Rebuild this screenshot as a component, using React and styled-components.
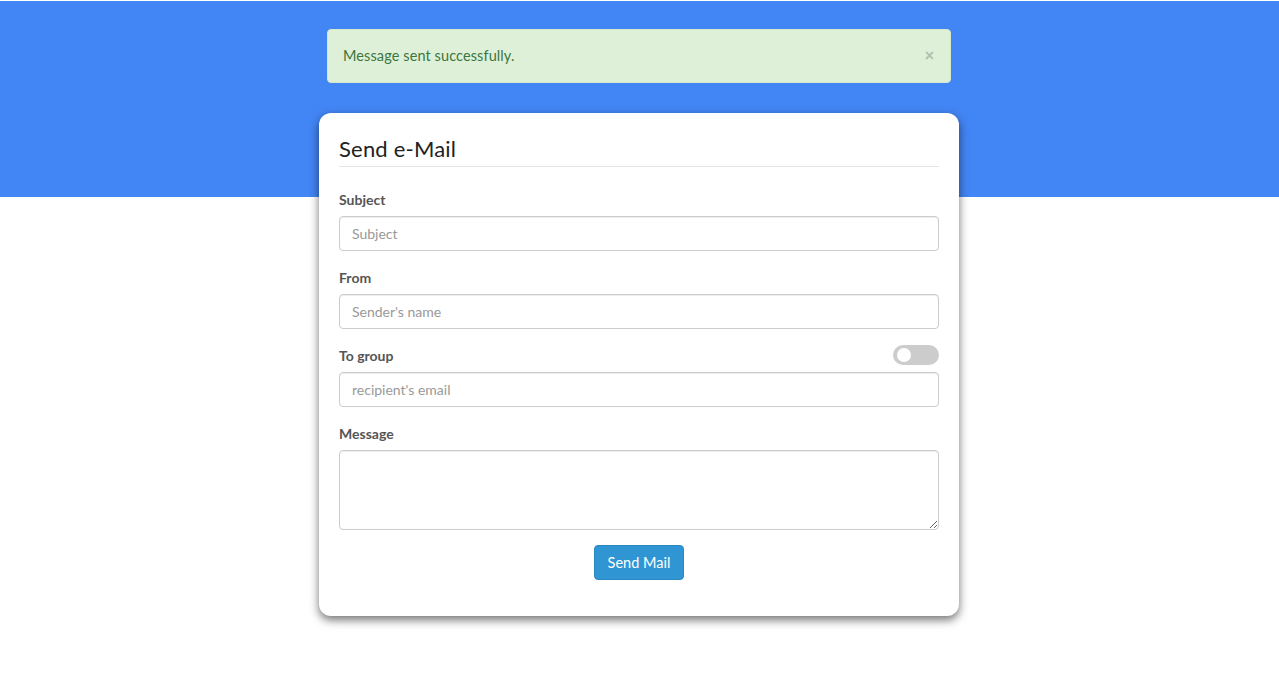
import React, { useState } from 'react';
import styled, { createGlobalStyle } from 'styled-components';

const GlobalStyle = createGlobalStyle`
    html, body {
        margin: 0;
        padding: 0;
        background: #fff;
    }

    body {
        font-family: 'Lato', 'Open Sans', sans-serif;
        font-size: 14px;
        line-height: 1.42857;
        color: #333;
    }

    * {
        box-sizing: border-box;
    }
`;

const Page = styled.div`
    position: relative;
    min-height: 681px;
    padding-top: 1px;
`;

const Banner = styled.div`
    height: 196px;
    background: #4285f4;
`;

const Content = styled.div`
    position: absolute;
    top: 29px;
    left: 0;
    right: 1px;
    display: flex;
    flex-direction: column;
    align-items: center;
`;

const Alert = styled.div`
    width: 624px;
    height: 54px;
    display: flex;
    align-items: center;
    justify-content: space-between;
    padding: 0 16px 0 15px;
    background: #dff0d8;
    border: 1px solid #d6e9c6;
    border-radius: 4px;
    color: #3c763d;
    font-size: 14.5px;
    letter-spacing: 0.1px;
`;

const Close = styled.button`
    border: 0;
    background: transparent;
    padding: 0;
    color: #000;
    opacity: 0.2;
    font-size: 16px;
    font-weight: 700;
    line-height: 1;
    cursor: pointer;
    font-family: 'Liberation Sans', sans-serif;
`;

const Card = styled.form`
    width: 640px;
    margin-top: 30px;
    padding: 20px 20px 36px;
    background: #fff;
    border-radius: 12px;
    box-shadow: 0 4px 10px rgba(0, 0, 0, 0.55);
`;

const Title = styled.h3`
    margin: 3px 0 0;
    padding-bottom: 4px;
    font-size: 22px;
    font-weight: 400;
    line-height: 26px;
    color: #222;
    border-bottom: 1px solid #e5e5e5;
    letter-spacing: 0.2px;
`;

const Fields = styled.div`
    margin-top: 23px;
`;

const Group = styled.div`
    margin-bottom: 17px;
`;

const LabelRow = styled.div`
    display: flex;
    align-items: flex-start;
    justify-content: space-between;
    height: 20px;
    margin-bottom: 6px;
`;

const Label = styled.label`
    font-weight: 700;
    color: #555;
    font-size: 14px;
    line-height: 20px;
`;

const Input = styled.input`
    display: block;
    width: 100%;
    height: 35px;
    padding: 6px 12px;
    font-family: inherit;
    font-size: 14px;
    color: #555;
    border: 1px solid #ccc;
    border-radius: 4px;
    box-shadow: inset 0 1px 1px rgba(0, 0, 0, 0.075);
    outline: none;

    &::placeholder {
        color: #999;
    }
`;

const TextArea = styled.textarea`
    display: block;
    width: 100%;
    height: 80px;
    padding: 6px 12px;
    font-family: inherit;
    font-size: 14px;
    border: 1px solid #ccc;
    border-radius: 4px;
    box-shadow: inset 0 1px 1px rgba(0, 0, 0, 0.075);
    outline: none;
    resize: vertical;
`;

const Toggle = styled.button`
    position: relative;
    width: 46px;
    height: 20px;
    margin-top: -1px;
    padding: 0;
    border: 0;
    border-radius: 10px;
    background: ${props => (props.on ? '#4285f4' : '#ccc')};
    cursor: pointer;

    &:after {
        content: '';
        position: absolute;
        top: 3px;
        left: ${props => (props.on ? '29px' : '4px')};
        width: 14px;
        height: 14px;
        border-radius: 50%;
        background: #fff;
        transition: left 0.2s;
    }
`;

const Actions = styled.div`
    display: flex;
    justify-content: center;
    margin-top: -2px;
`;

const Button = styled.button`
    width: 90px;
    height: 35px;
    padding: 0;
    border: 1px solid #2a88c0;
    border-radius: 4px;
    background: #3096d3;
    color: #fff;
    font-family: inherit;
    font-size: 14.5px;
    cursor: pointer;
`;

export default function App() {
    const [toGroup, setToGroup] = useState(false);

    return (
        <Page>
            <GlobalStyle />
            <Banner />
            <Content>
                <Alert>
                    <span>Message sent successfully.</span>
                    <Close type="button" aria-label="Close">×</Close>
                </Alert>
                <Card onSubmit={e => e.preventDefault()}>
                    <Title>Send e-Mail</Title>
                    <Fields>
                        <Group>
                            <LabelRow>
                                <Label htmlFor="subject">Subject</Label>
                            </LabelRow>
                            <Input id="subject" placeholder="Subject" />
                        </Group>
                        <Group>
                            <LabelRow>
                                <Label htmlFor="from">From</Label>
                            </LabelRow>
                            <Input id="from" placeholder="Sender's name" />
                        </Group>
                        <Group>
                            <LabelRow>
                                <Label htmlFor="to">To group</Label>
                                <Toggle type="button" on={toGroup ? 1 : 0} onClick={() => setToGroup(!toGroup)} />
                            </LabelRow>
                            <Input id="to" placeholder="recipient's email" />
                        </Group>
                        <Group>
                            <LabelRow>
                                <Label htmlFor="message">Message</Label>
                            </LabelRow>
                            <TextArea id="message" />
                        </Group>
                    </Fields>
                    <Actions>
                        <Button type="submit">Send Mail</Button>
                    </Actions>
                </Card>
            </Content>
        </Page>
    );
}
